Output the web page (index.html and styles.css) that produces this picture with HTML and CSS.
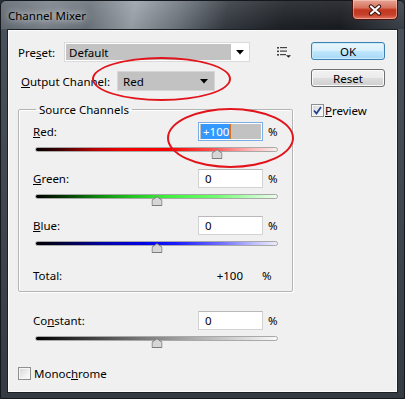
FILE: index.html
```html
<!DOCTYPE html>
<html>
<head>
<meta charset="utf-8">
<title>Channel Mixer</title>
<link rel="stylesheet" href="styles.css">
</head>
<body>
<div class="window">
  <div class="titlebar">
    <span class="title">Channel Mixer</span>
    <div class="close">
      <svg width="16" height="12" viewBox="0 0 16 12"><path d="M4 2.5 L12 9.5 M12 2.5 L4 9.5" stroke="#3a1610" stroke-width="4.2" stroke-linecap="round"/><path d="M4 2.5 L12 9.5 M12 2.5 L4 9.5" stroke="#ffffff" stroke-width="2.2" stroke-linecap="round"/></svg>
    </div>
  </div>
  <div class="client">
    <div class="left">
      <div class="row preset-row">
        <span class="preset-lbl">Pre<u>s</u>et:</span>
        <div class="dropdown preset-dd">
          <span class="dd-field">Default</span>
          <span class="dd-arrow"><svg width="8" height="5" viewBox="0 0 8 5"><path d="M0 0H8L4 4.5Z" fill="#000"/></svg></span>
        </div>
        <svg class="menu-icon" width="15" height="12" viewBox="0 0 15 12">
          <rect x="0" y="1" width="2" height="1.6" fill="#444"/>
          <rect x="3" y="1" width="7" height="1.2" fill="#444"/>
          <rect x="0" y="4.5" width="2" height="1.6" fill="#444"/>
          <rect x="3" y="4.5" width="7" height="1.2" fill="#444"/>
          <rect x="0" y="8" width="2" height="1.6" fill="#444"/>
          <rect x="3" y="8" width="6" height="1.2" fill="#444"/>
          <path d="M9 9.2H14L11.5 11.8Z" fill="#222"/>
        </svg>
      </div>
      <div class="row output-row">
        <span class="output-lbl"><u>O</u>utput Channel:</span>
        <div class="dropdown output-dd">
          <span class="dd-field">Red</span>
          <span class="dd-arrow"><svg width="8" height="5" viewBox="0 0 8 5"><path d="M0 0H8L4 4.5Z" fill="#000"/></svg></span>
        </div>
      </div>
      <fieldset class="group">
        <legend>Source Channels</legend>
        <div class="channel">
          <div class="ch-top">
            <span class="ch-lbl"><u>R</u>ed:</span>
            <div class="num focused"><div class="num-inner"><span class="selection">+100</span><span class="caret"></span></div></div>
            <span class="pct">%</span>
          </div>
          <div class="track red">
            <svg class="thumb" style="left:75%" width="11" height="10" viewBox="0 0 11 10"><path d="M0.5 9.5V4.2L5.5 0.7L10.5 4.2V9.5Z" fill="#d6d6d6" stroke="#7c7c7c"/></svg>
          </div>
        </div>
        <div class="channel">
          <div class="ch-top">
            <span class="ch-lbl"><u>G</u>reen:</span>
            <div class="num"><div class="num-inner">0</div></div>
            <span class="pct">%</span>
          </div>
          <div class="track green">
            <svg class="thumb" style="left:50%" width="11" height="10" viewBox="0 0 11 10"><path d="M0.5 9.5V4.2L5.5 0.7L10.5 4.2V9.5Z" fill="#d6d6d6" stroke="#7c7c7c"/></svg>
          </div>
        </div>
        <div class="channel">
          <div class="ch-top">
            <span class="ch-lbl"><u>B</u>lue:</span>
            <div class="num"><div class="num-inner">0</div></div>
            <span class="pct">%</span>
          </div>
          <div class="track blue">
            <svg class="thumb" style="left:50%" width="11" height="10" viewBox="0 0 11 10"><path d="M0.5 9.5V4.2L5.5 0.7L10.5 4.2V9.5Z" fill="#d6d6d6" stroke="#7c7c7c"/></svg>
          </div>
        </div>
        <div class="total">
          <span class="total-lbl">Total:</span>
          <span class="total-val">+100</span>
          <span class="total-pct">%</span>
        </div>
      </fieldset>
      <div class="channel constant">
        <div class="ch-top">
          <span class="ch-lbl">Co<u>n</u>stant:</span>
          <div class="num"><div class="num-inner">0</div></div>
          <span class="pct">%</span>
        </div>
        <div class="track gray">
          <svg class="thumb" style="left:50%" width="11" height="10" viewBox="0 0 11 10"><path d="M0.5 9.5V4.2L5.5 0.7L10.5 4.2V9.5Z" fill="#d6d6d6" stroke="#7c7c7c"/></svg>
        </div>
      </div>
      <div class="check-row mono">
        <span class="checkbox"></span>
        <span class="check-lbl">Monoc<u>h</u>rome</span>
      </div>
    </div>
    <div class="right">
      <button class="btn default">OK</button>
      <button class="btn reset">Reset</button>
      <div class="check-row preview">
        <span class="checkbox"><svg width="11" height="11" viewBox="0 0 11 11"><path d="M2 5.5L4.5 8.5L9 2" fill="none" stroke="#23408f" stroke-width="1.8"/></svg></span>
        <span class="check-lbl"><u>P</u>review</span>
      </div>
    </div>
    <div class="annot a1"></div>
    <div class="annot a2"></div>
  </div>
</div>
</body>
</html>
```

FILE: styles.css
```css
* { box-sizing: border-box; }
html, body { margin: 0; padding: 0; }
body {
  width: 405px;
  height: 399px;
  overflow: hidden;
  background: #2a2f35;
  font-family: "Noto Sans", "Open Sans", sans-serif;
  font-size: 11.5px;
  color: #000;
}
u { text-underline-offset: 1px; }

.window {
  width: 405px;
  height: 399px;
  display: flex;
  flex-direction: column;
  border: 1px solid #15181c;
  border-radius: 6px 6px 2px 2px;
  background: linear-gradient(to bottom, #4a525b, #353b43);
  padding: 0 6px 5px 6px;
}

.titlebar {
  margin: 0 -6px;
  padding: 0 6px;
  height: 28px;
  flex: none;
  display: flex;
  justify-content: space-between;
  align-items: center;
  border-radius: 5px 5px 0 0;
  background:
    linear-gradient(to bottom, rgba(255,255,255,0.10), rgba(0,0,0,0.05)),
    linear-gradient(100deg, #5f6770 0%, #7b838c 12%, #6a727b 22%, #9ba2a9 33%, #6f777f 44%, #353a41 56%, #1d2126 70%, #181b20 84%, #3d434b 100%);
}
.title {
  padding-left: 1px;
  text-shadow: 0 0 6px rgba(255,255,255,0.85), 0 0 12px rgba(255,255,255,0.6);
}
.close {
  align-self: flex-start;
  margin-top: -1px;
  width: 46px;
  height: 20px;
  display: flex;
  align-items: center;
  justify-content: center;
  border: 1px solid #4a140c;
  border-top: none;
  border-radius: 0 0 5px 5px;
  background: linear-gradient(to bottom, #e6a595 0%, #d7735f 40%, #c2361f 52%, #c6402a 78%, #e27560 100%);
  box-shadow: inset 0 0 0 1px rgba(255,220,210,0.45);
}

.client {
  position: relative;
  flex: 1;
  background: #f0f0f0;
  border: 1px solid #1d2126;
  box-shadow: inset 0 0 0 1px #fbfbfb;
  display: grid;
  grid-template-columns: 275px 74px;
  column-gap: 18px;
  align-items: start;
  padding: 12px 0 0 10px;
}

.left { display: flex; flex-direction: column; }
.row { display: flex; align-items: center; height: 20px; }
.output-row { margin-top: 9px; }
.preset-lbl { width: 46px; }
.output-lbl { width: 99px; padding-left: 3px; }

.dropdown {
  height: 20px;
  display: flex;
  border: 1px solid #dadada;
  background: #fff;
  padding: 1px;
}
.preset-dd { width: 186px; }
.output-dd { width: 98px; background: #c2c2c2; border-color: #d6d6d6; padding: 0; }
.dd-field {
  flex: 1;
  display: flex;
  align-items: center;
  padding-left: 3px;
  background: #c3c3c3;
}
.output-dd .dd-field { padding-left: 5px; background: transparent; }
.dd-arrow {
  width: 17px;
  display: flex;
  align-items: center;
  justify-content: center;
}
.output-dd .dd-arrow { width: 18px; padding-right: 2px; }
.menu-icon { margin-left: 27px; }

.group {
  margin: 10px 0 0 0;
  padding: 4px 14px 8px 14px;
  width: 275px;
  min-width: 0;
  border: 1px solid #b4b4b4;
  border-radius: 2px;
  box-shadow: 1px 1px 0 #ffffff, inset 1px 1px 0 #ffffff;
}
.group legend {
  margin-left: 3px;
  padding: 0 3px;
  line-height: 17px;
}

.channel { display: flex; flex-direction: column; }
.channel + .channel { margin-top: 17px; }
.ch-top { display: flex; align-items: center; height: 19px; }
.ch-lbl { width: 165px; }
.num {
  width: 65px;
  height: 19px;
  display: flex;
  border: 1px solid #d3d3d3;
  border-top-color: #b9b9b9;
  background: #fff;
  padding: 1px;
}
.num-inner {
  flex: 1;
  display: flex;
  align-items: center;
  padding-left: 5px;
  background: #fff;
}
.num.focused { border-color: #78aee6; }
.num.focused .num-inner { background: #c2c2c2; padding-left: 1px; }
.selection {
  background: #3399ff;
  color: #fff;
  padding: 0 1px 0 2px;
  line-height: 15px;
}
.caret { width: 1px; height: 15px; background: #d4701e; }
.pct { margin-left: 5px; }

.track {
  position: relative;
  margin: 6px 0 0 2px;
  width: 243px;
  height: 5px;
  border: 1px solid #a9a9a9;
  border-radius: 3px;
}
.track.red { background: linear-gradient(to right, #000 0%, #3a0000 9%, #b80000 24%, #f00000 36%, #ff0000 55%, #ff4a4a 72%, #ffb0b0 88%, #fbecec 100%); }
.track.green { background: linear-gradient(to right, #000 0%, #032e03 10%, #0c8a0c 26%, #22c422 40%, #40f040 55%, #6cfc6c 74%, #c0fcc0 90%, #eefcee 100%); }
.track.blue { background: linear-gradient(to right, #000 0%, #000034 10%, #0000a6 28%, #0000e6 44%, #1a1aff 58%, #6a6aff 76%, #c2c2ff 91%, #ececfb 100%); }
.track.gray { background: linear-gradient(to right, #000 0%, #2a2a2a 15%, #6e6e6e 40%, #a0a0a0 60%, #d8d8d8 85%, #f8f8f8 100%); }
.thumb {
  position: absolute;
  top: 1px;
  transform: translateX(-50%);
}

.total { display: flex; align-items: center; height: 16px; margin-top: 21px; }
.total-lbl { width: 165px; }
.total-val { width: 45px; text-align: right; }
.total-pct { margin-left: 19px; }

.constant { margin-top: 19px; padding-left: 15px; }

.check-row { display: flex; align-items: center; height: 13px; line-height: 13px; }
.mono { margin-top: 26px; }
.checkbox {
  width: 13px;
  height: 13px;
  flex: none;
  border: 1px solid #8e8f8f;
  background: linear-gradient(135deg, #d4d4d4 0%, #f0f0f0 60%, #fbfbfb 100%);
  box-shadow: inset 0 0 0 1px #f6f6f6;
  display: flex;
  align-items: center;
  justify-content: center;
}
.check-lbl { margin-left: 3px; }
.preview .check-lbl { margin-left: 1px; }

.right { display: flex; flex-direction: column; }
.btn {
  width: 74px;
  height: 18px;
  padding: 0;
  font-family: inherit;
  font-size: 11.5px;
  color: #000;
  line-height: 15px;
  border: 1px solid #707070;
  border-radius: 3px;
  background: linear-gradient(to bottom, #f2f2f2 0%, #ebebeb 48%, #dddddd 52%, #cfcfcf 100%);
  box-shadow: inset 0 0 0 1px #fbfbfb;
}
.btn.default {
  border-color: #3c7fb1;
  background: linear-gradient(to bottom, #eaf6fd 0%, #d9f0fc 48%, #bee6fd 52%, #a7d9f5 100%);
  box-shadow: inset 0 0 0 1px #c8ecfc;
}
.btn.reset { margin-top: 9px; }
.preview { margin-top: 17px; }

.annot {
  position: absolute;
  border: 2px solid #e2141b;
  border-radius: 50%;
}
.a1 { left: 84px; top: 27px; width: 139px; height: 44px; }
.a2 { left: 159px; top: 78px; width: 127px; height: 60px; }
```
